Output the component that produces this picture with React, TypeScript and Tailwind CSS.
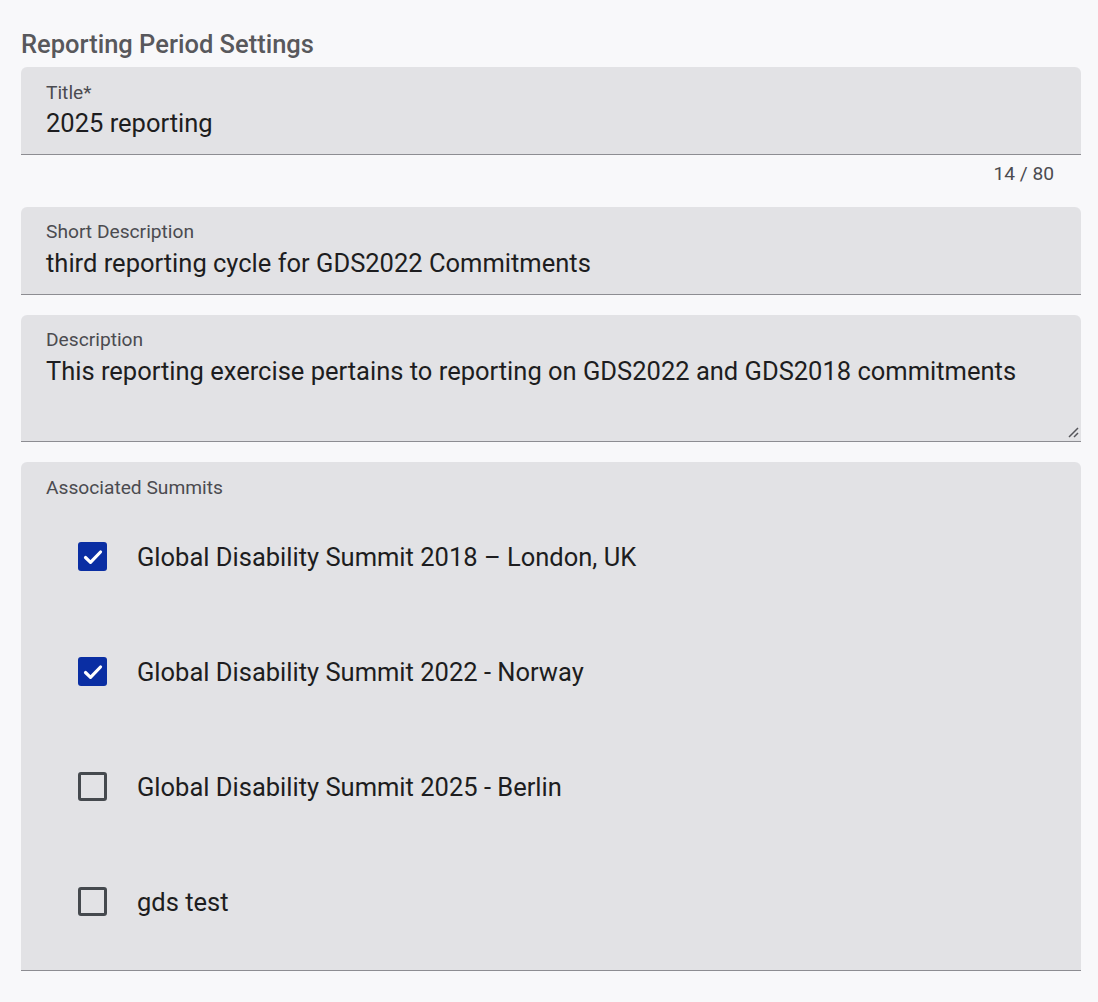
import { useState } from 'react';

const summits = [
  { id: 1, name: 'Global Disability Summit 2018 – London, UK', checked: true },
  { id: 2, name: 'Global Disability Summit 2022 - Norway', checked: true },
  { id: 3, name: 'Global Disability Summit 2025 - Berlin', checked: false },
  { id: 4, name: 'gds test', checked: false },
];

function Checkbox({ checked, onClick }: { checked: boolean; onClick: () => void }) {
  if (checked) {
    return (
      <button onClick={onClick} className="w-[29px] h-[29px] rounded-[3px] bg-[#0a2ea3] flex items-center justify-center shrink-0">
        <svg viewBox="0 0 24 24" className="w-[24px] h-[24px]" fill="none">
          <path d="M4.5 12.5l5 4.8L19.5 7" stroke="white" strokeWidth="3.2" strokeLinecap="round" strokeLinejoin="round" />
        </svg>
      </button>
    );
  }
  return (
    <button
      onClick={onClick}
      className="w-[29px] h-[29px] rounded-[3px] border-[3px] border-[#45494e] shrink-0"
    />
  );
}

export default function App() {
  const [items, setItems] = useState(summits);

  const toggle = (id: number) => {
    setItems(items.map((s) => (s.id === id ? { ...s, checked: !s.checked } : s)));
  };

  return (
    <div className="min-h-screen bg-[#f8f8fa] pl-[21px] pr-[17px] pt-[28px] font-['Roboto',sans-serif]">
      <h2 className="text-[25.5px] leading-[32px] font-medium text-[#58585c]">Reporting Period Settings</h2>

      {/* Title */}
      <div className="mt-[7px] h-[88px] rounded-t-[6px] bg-[#e2e2e5] border-b-[1.6px] border-[#8d8d92] px-[25px] pt-[16px]">
        <div className="text-[19.2px] leading-[20px] text-[#4b4b50]">Title*</div>
        <div className="mt-[4px] text-[25.5px] leading-[32px] text-[#1d1d20]">2025 reporting</div>
      </div>
      <div className="flex justify-end pr-[27px] pt-[8px] h-[52px]">
        <span className="text-[19.2px] leading-[22px] text-[#4b4b50]">14 / 80</span>
      </div>

      {/* Short description */}
      <div className="h-[88px] rounded-t-[6px] bg-[#e2e2e5] border-b-[1.6px] border-[#8d8d92] px-[25px] pt-[15px]">
        <div className="text-[19.2px] leading-[20px] text-[#4b4b50]">Short Description</div>
        <div className="mt-[5px] text-[25.5px] leading-[32px] text-[#1d1d20]">third reporting cycle for GDS2022 Commitments</div>
      </div>

      {/* Description */}
      <div className="mt-[20px] h-[127px] rounded-t-[6px] bg-[#e2e2e5] border-b-[1.6px] border-[#8d8d92] px-[25px] pt-[15px] relative">
        <div className="text-[19.2px] leading-[20px] text-[#4b4b50]">Description</div>
        <div className="mt-[5px] text-[25.5px] leading-[32px] text-[#1d1d20]">
          This reporting exercise pertains to reporting on GDS2022 and GDS2018 commitments
        </div>
        <svg className="absolute right-[2px] bottom-[3px] w-[11px] h-[11px]" viewBox="0 0 11 11">
          <path d="M1 10L10 1M6 10L10 6" stroke="#55555a" strokeWidth="1.5" />
        </svg>
      </div>

      {/* Associated summits */}
      <div className="mt-[20px] h-[509px] rounded-t-[6px] bg-[#e2e2e5] border-b-[1.6px] border-[#8d8d92] px-[25px] pt-[16px]">
        <div className="text-[19.2px] leading-[20px] text-[#4b4b50]">Associated Summits</div>
        <div className="mt-[1px] flex flex-col">
          {items.map((s) => (
            <div key={s.id} className="h-[115px] flex items-center pl-[32px] gap-[30px]">
              <Checkbox checked={s.checked} onClick={() => toggle(s.id)} />
              <span className="text-[25.5px] leading-[32px] text-[#1d1d20]">{s.name}</span>
            </div>
          ))}
        </div>
      </div>
    </div>
  );
}
